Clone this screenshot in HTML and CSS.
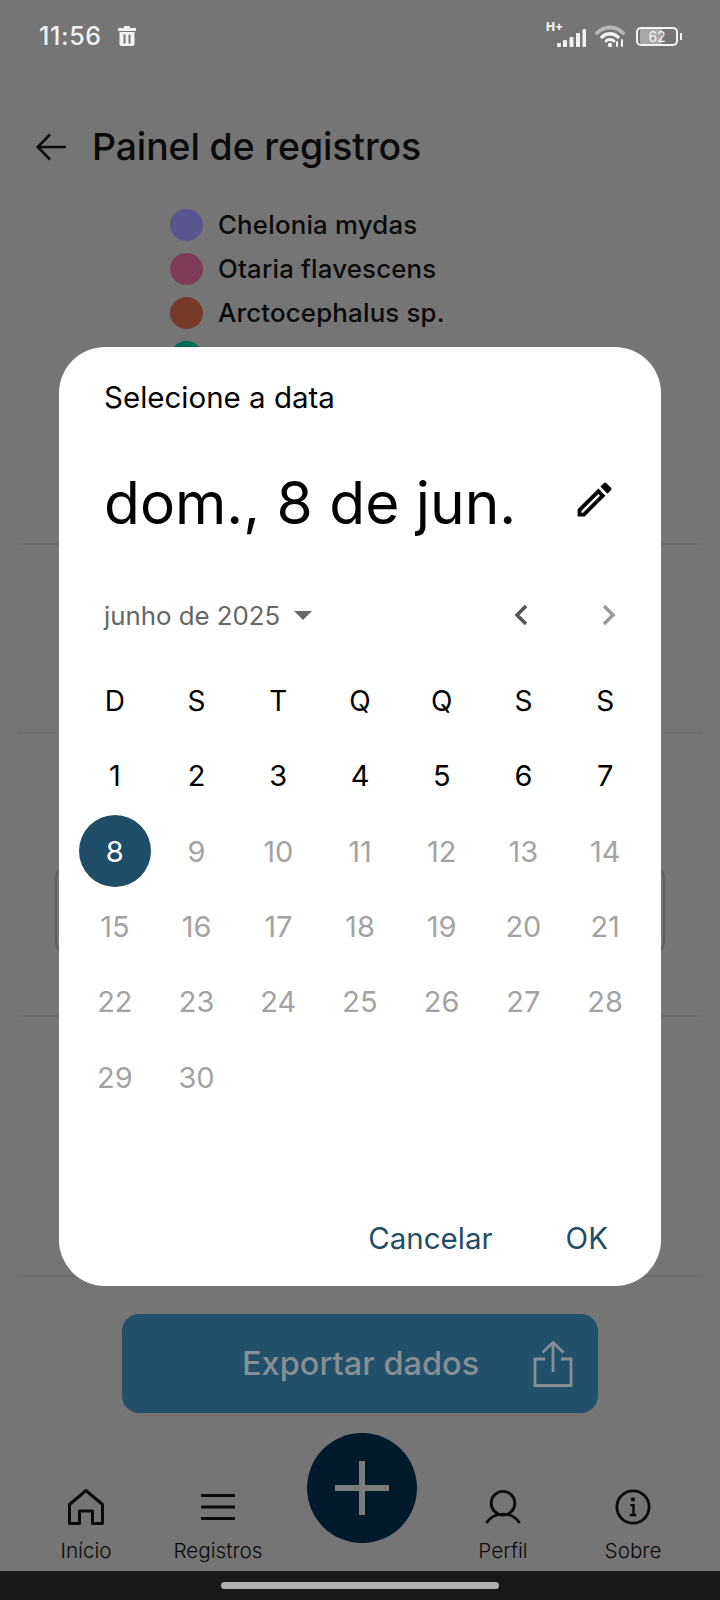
FILE: index.html
```html
<!DOCTYPE html>
<html lang="pt-BR">
<head>
<meta charset="utf-8">
<title>Painel de registros</title>
<link rel="stylesheet" href="styles.css">
</head>
<body>
<div class="app">
  <div class="status">
    <span class="time">11:56</span>
    <svg class="trash" viewBox="0 0 18 20"><path d="M6 0h6v2h6v3H0V2h6zM1.500 6h15v12a2 2 0 0 1-2 2h-11a2 2 0 0 1-2-2zM5.500 8.500v9h2v-9zM10.500 8.500v9h2v-9z" fill-rule="evenodd"/></svg>
    <span class="status-right">
      <span class="net">H+</span>
      <svg class="signal" viewBox="0 0 29 18"><rect x="0" y="14" width="4" height="4" rx="1"/><rect x="6" y="11" width="4" height="7" rx="1"/><rect x="12.500" y="8" width="4" height="10" rx="1"/><rect x="19" y="4" width="4" height="14" rx="1"/><rect x="25.500" y="0" width="3.500" height="18" rx="1"/></svg>
      <svg class="wifi" viewBox="0 0 30 22" fill="none" stroke-linecap="round">
        <path d="M2 8 C9 0.500 21 0.500 28 8" stroke="#b5b5b5" stroke-width="4"/>
        <path d="M7 12 C11 7.500 19 7.500 23 12" stroke="#f2f2f2" stroke-width="3.500"/>
        <path d="M11 16 C13 14 17 14 19 16" stroke="#f2f2f2" stroke-width="3"/>
        <circle cx="15" cy="20" r="2.200" fill="#f2f2f2"/>
        <path d="M22 17v4M27 15v6" stroke="#f2f2f2" stroke-width="2"/>
      </svg>
      <span class="battery">62</span>
      <span class="battery-tip"></span>
    </span>
  </div>

  <header class="topbar">
    <svg class="back" viewBox="0 0 30 28" fill="none" stroke="#0c0c0c" stroke-width="2.600"><path d="M30 14H2M14 1.500 1.800 14 14 26.500"/></svg>
    <h1 class="title">Painel de registros</h1>
  </header>

  <section class="section section-legend">
    <ul class="legend">
      <li class="legend-item"><span class="dot dot-purple"></span>Chelonia mydas</li>
      <li class="legend-item"><span class="dot dot-pink"></span>Otaria flavescens</li>
      <li class="legend-item"><span class="dot dot-brown"></span>Arctocephalus sp.</li>
      <li class="legend-item"><span class="dot dot-teal"></span></li>
    </ul>
  </section>
  <section class="section section-b"></section>
  <section class="section section-c"><div class="field"></div></section>
  <section class="section section-d"></section>

  <button class="export">
    <span class="export-label">Exportar dados</span>
    <svg class="export-icon" viewBox="0 0 40 46" fill="none" stroke="#858f95" stroke-width="2.800"><path d="M20 31V2M9.500 11.500 20 1.500l10.500 10M12 18H2v26.500h36V18H28"/></svg>
  </button>

  <nav class="nav">
    <div class="nav-item">
      <svg class="nav-icon" viewBox="0 0 36 36" fill="none" stroke="#0a0a0a" stroke-width="3"><path d="M1.500 15.500 18 1.500l16.500 14v19h-10V22h-13v12.500h-10z" stroke-linejoin="round"/></svg>
      <span class="nav-label">Início</span>
    </div>
    <div class="nav-item">
      <svg class="nav-icon" viewBox="0 0 36 36" fill="none" stroke="#0a0a0a" stroke-width="3"><path d="M1 6.500h34M1 18h34M1 29.500h34"/></svg>
      <span class="nav-label">Registros</span>
    </div>
    <div class="fab-cell">
      <div class="fab"><svg class="fab-plus" viewBox="0 0 54 54"><path d="M24 0h6v24h24v6H30v24h-6V30H0v-6h24z"/></svg></div>
    </div>
    <div class="nav-item">
      <svg class="nav-icon" viewBox="0 0 38 36" fill="none" stroke="#0a0a0a" stroke-width="3"><circle cx="19" cy="14" r="12.500"/><path d="M1.500 35C6 27.500 12 25.500 19 25.500S32 27.500 36.500 35"/></svg>
      <span class="nav-label">Perfil</span>
    </div>
    <div class="nav-item">
      <svg class="nav-icon" viewBox="0 0 38 38" fill="none" stroke="#0a0a0a" stroke-width="3"><circle cx="19" cy="19" r="17"/><path d="M16 17h3.500v10M15.500 27.500h7" stroke-width="2.500"/><circle cx="19" cy="11" r="2.200" fill="#0a0a0a" stroke="none"/></svg>
      <span class="nav-label">Sobre</span>
    </div>
  </nav>

  <div class="gesture-bar"><span class="gesture-pill"></span></div>

  <div class="dialog">
    <div class="dialog-title">Selecione a data</div>
    <div class="headline-row">
      <span class="headline">dom., 8 de jun.</span>
      <svg class="pencil" viewBox="0 0 24 24"><path d="M3 17.250V21h3.750L17.810 9.940l-3.750-3.750L3 17.250zM5.920 19H5v-.92l9.060-9.060.92.92L5.920 19zM20.710 5.630l-2.340-2.340c-.39-.39-1.020-.39-1.410 0l-1.830 1.830 3.750 3.750 1.830-1.830c.39-.39.39-1.020 0-1.410z"/></svg>
    </div>
    <div class="month-row">
      <span class="month">junho de 2025</span>
      <svg class="caret" viewBox="0 0 18 9"><path d="M0 0h18L9 9z"/></svg>
      <svg class="chev chev-left" viewBox="0 0 16 24" fill="none" stroke-width="3.500"><path d="M13 3 4 12l9 9"/></svg>
      <svg class="chev chev-right" viewBox="0 0 16 24" fill="none" stroke-width="3.500"><path d="M3 3l9 9-9 9"/></svg>
    </div>
    <div class="grid">
      <span class="cell head">D</span><span class="cell head">S</span><span class="cell head">T</span><span class="cell head">Q</span><span class="cell head">Q</span><span class="cell head">S</span><span class="cell head">S</span>
      <span class="cell">1</span><span class="cell">2</span><span class="cell">3</span><span class="cell">4</span><span class="cell">5</span><span class="cell">6</span><span class="cell">7</span>
      <span class="cell"><span class="selected">8</span></span><span class="cell off">9</span><span class="cell off">10</span><span class="cell off">11</span><span class="cell off">12</span><span class="cell off">13</span><span class="cell off">14</span>
      <span class="cell off">15</span><span class="cell off">16</span><span class="cell off">17</span><span class="cell off">18</span><span class="cell off">19</span><span class="cell off">20</span><span class="cell off">21</span>
      <span class="cell off">22</span><span class="cell off">23</span><span class="cell off">24</span><span class="cell off">25</span><span class="cell off">26</span><span class="cell off">27</span><span class="cell off">28</span>
      <span class="cell off">29</span><span class="cell off">30</span>
    </div>
    <div class="actions">
      <span class="action">Cancelar</span>
      <span class="action">OK</span>
    </div>
  </div>
</div>
</body>
</html>
```
FILE: styles.css
```css
* { box-sizing: border-box; }
html, body { margin: 0; padding: 0; }
body { font-family: Inter, "Noto Sans", sans-serif; }
.app {
  position: relative;
  width: 720px;
  height: 1600px;
  overflow: hidden;
  background: #757575;
  display: flex;
  flex-direction: column;
  color: #0a0a0a;
}

/* status bar */
.status {
  height: 72px;
  display: flex;
  align-items: center;
  padding: 0 39px;
  color: #f2f2f2;
  flex: none;
}
.time { font-size: 25px; font-weight: 500; letter-spacing: .6px; }
.trash { width: 18px; height: 20px; margin-left: 16px; fill: #f2f2f2; }
.status-right { margin-left: auto; margin-right: -1px; display: flex; align-items: center; position: relative; }
.net { position: absolute; left: -11px; top: -4px; font-size: 12px; font-weight: 800; line-height: 12px; }
.signal { width: 29px; height: 18px; fill: #f2f2f2; margin-top: 3px; }
.wifi { width: 30px; height: 22px; margin-left: 9px; margin-top: 0; overflow: visible; }
.battery {
  margin-left: 11px;
  width: 42px;
  height: 19px;
  border: 2px solid #f2f2f2;
  border-radius: 5px;
  font-size: 14px;
  line-height: 15px;
  text-align: center;
  background: linear-gradient(90deg, #a8a8a8 62%, transparent 62%);
  background-clip: content-box;
  padding: 0 2px;
}
.battery-tip { width: 2px; height: 7px; margin-left: 2px; background: #f2f2f2; }

/* header */
.topbar {
  flex: none;
  height: 62px;
  margin-top: 44px;
  display: flex;
  align-items: center;
  padding-left: 36px;
}
.back { width: 30px; height: 28px; flex: none; }
.title { margin: 0 0 0 26px; font-size: 37.400px; font-weight: 500; line-height: 44px; letter-spacing: -.1px; }

/* sections behind the dialog */
.section { flex: none; border-bottom: 2px solid #6d6d6d; margin: 0 18px; }
.section-legend { height: 367px; padding: 31px 0 0 152px; }
.section-b { height: 189px; }
.section-c { height: 283px; padding-top: 132px; }
.section-d { height: 260px; }
.field { height: 88px; margin: 0 37px; border: 2px solid #5f5f5f; border-radius: 12px; }
.legend { list-style: none; margin: 0; padding: 0; display: flex; flex-direction: column; gap: 12px; }
.legend-item { height: 32px; line-height: 30px; display: flex; align-items: center; gap: 15px; font-size: 25.800px; font-weight: 500; letter-spacing: .2px; }
.dot { width: 33px; height: 32px; border-radius: 50%; flex: none; }
.dot-purple { background: #59558f; }
.dot-pink { background: #803b58; }
.dot-brown { background: #773a29; }
.dot-teal { background: #036b5a; }

/* export */
.export {
  flex: none;
  width: 476px;
  height: 99px;
  margin: 37px 0 0 122px;
  border: 0;
  border-radius: 17px;
  background: #22506a;
  display: flex;
  align-items: center;
  font-family: inherit;
  padding: 0 0 0 120px;
}
.export-label { font-size: 32.500px; font-weight: 500; color: #858f95; }
.export-icon { width: 40px; height: 46px; margin-left: 54px; }

/* nav */
.nav {
  flex: none;
  height: 158px;
  display: grid;
  grid-template-columns: 172px 92px 196px 86px 174px;
  margin-top: 20px;
  align-items: start;
}
.nav-item { display: flex; flex-direction: column; align-items: center; padding-top: 56px; }
.nav-icon { width: 36px; height: 36px; display: block; overflow: visible; }
.nav-label { margin-top: 13px; font-size: 20.700px; line-height: 26px; font-weight: 300; color: #0a0a0a; white-space: nowrap; }
.fab-cell { display: flex; justify-content: center; }
.fab {
  width: 110px;
  height: 110px;
  border-radius: 50%;
  background: #001a2c;
  display: flex;
  align-items: center;
  justify-content: center;
}
.fab-plus { width: 54px; height: 54px; fill: #7b7b7b; }

.gesture-bar {
  position: absolute;
  left: 0;
  right: 0;
  bottom: 0;
  height: 29px;
  background: #181818;
  display: flex;
  justify-content: center;
  padding-top: 11px;
}
.gesture-pill { width: 278px; height: 7px; border-radius: 4px; background: #b0b0b0; }

/* dialog */
.dialog {
  position: absolute;
  left: 59px;
  top: 347px;
  width: 602px;
  height: 939px;
  border-radius: 46px;
  background: #fff;
  color: #000;
  display: flex;
  flex-direction: column;
  padding-top: 36px;
}
.dialog-title { margin: 0 0 2px 45px; font-size: 29.500px; line-height: 28px; font-weight: 400; }
.headline-row {
  margin: 56px 0 0 45px;
  height: 68px;
  display: flex;
  align-items: center;
  position: relative;
}
.headline { font-size: 58.600px; line-height: 68px; font-weight: 400; white-space: nowrap; }
.pencil { width: 45px; height: 45px; position: absolute; left: 468px; top: 8px; fill: #000; }
.month-row {
  margin: 58px 0 0 45px;
  height: 40px;
  display: flex;
  align-items: center;
  color: #666;
}
.month { font-size: 25.800px; font-weight: 400; }
.caret { width: 18px; height: 9px; margin-left: 14px; fill: #666; }
.chev { width: 16px; height: 24px; }
.chev-left { margin-left: auto; margin-right: 1px; stroke: #555; }
.chev-right { margin-left: 71px; margin-right: 44px; stroke: #9a9a9a; }
.grid {
  margin: 28px 15px 0 15px;
  display: grid;
  grid-template-columns: repeat(7, 1fr);
  grid-auto-rows: 75.300px;
}
.cell { display: flex; align-items: center; justify-content: center; font-size: 29px; font-weight: 400; color: #000; }
.head { font-size: 28px; }
.off { color: #a3a3a3; }
.selected {
  width: 72px;
  height: 72px;
  border-radius: 50%;
  background: #1f4d67;
  color: #fff;
  display: flex;
  align-items: center;
  justify-content: center;
}
.actions {
  margin-top: auto;
  padding: 0 53px 33px 0;
  height: 63px;
  display: flex;
  justify-content: flex-end;
  gap: 73px;
  align-items: center;
}
.action { font-size: 29.500px; line-height: 30px; color: #1f4d67; }
```
